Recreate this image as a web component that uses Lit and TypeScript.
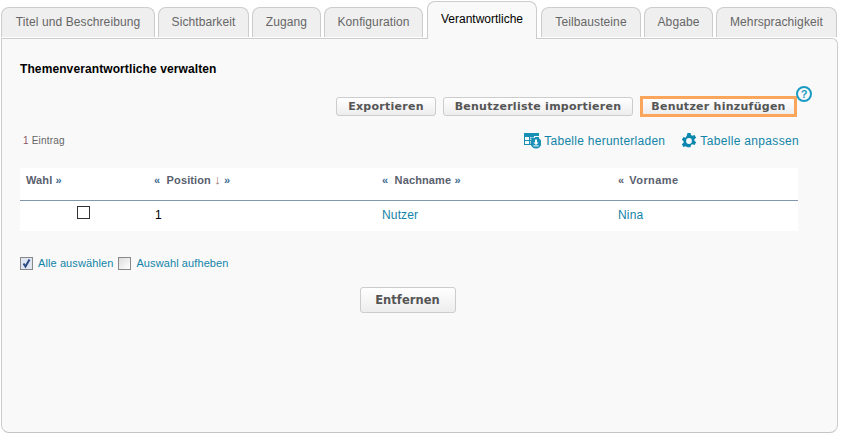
import { LitElement, html, css, svg } from "lit";
import { customElement } from "lit/decorators.js";

const TABS: [string, number, boolean][] = [
  ["Titel und Beschreibung", 154, false],
  ["Sichtbarkeit", 91, false],
  ["Zugang", 69, false],
  ["Konfiguration", 99, false],
  ["Verantwortliche", 110, true],
  ["Teilbausteine", 100, false],
  ["Abgabe", 69, false],
  ["Mehrsprachigkeit", 121, false],
];

const dlIcon = svg`<svg width="17" height="16" viewBox="0 0 17 16"><g fill="#1a8fb5"><rect x="0" y="0" width="15" height="3"/><path fill-rule="evenodd" d="M0 3h10v1H6v3h3v1H6v3h2v1H0zM1 4v3h4V4zM1 8v3h4V8z"/><rect x="6.500" y="4.500" width="3.500" height="2"/><rect x="11" y="4" width="4" height="2"/></g><circle cx="12" cy="10" r="5.500" fill="#1a8fb5"/><path d="M11 6.400h2v3h1.700l-2.700 2.600-2.700-2.600h1.700z" fill="#fff"/><rect x="9.300" y="12.400" width="5.400" height="1" fill="#fff"/></svg>`;

const gearIcon = svg`<svg width="16" height="16" viewBox="0 0 16 16"><path fill-rule="evenodd" fill="#0d86ad" d="M6.500 0h3l.5 2.200 1.400.8 2.200-.7 1.500 2.600-1.700 1.500v1.600l1.700 1.500-1.500 2.600-2.200-.7-1.400.8-.5 2.200h-3L6 14.200l-1.400-.8-2.200.7L.9 11.500l1.700-1.500V8.400L.9 6.900l1.500-2.600 2.200.7L6 2.200zM8 5.300a2.900 2.900 0 1 0 0 5.800 2.900 2.900 0 0 0 0-5.800z" transform="translate(0 -.2)"/></svg>`;

@customElement("app-root")
export class AppRoot extends LitElement {
  static styles = css`
    :host {
      display: block;
      width: 841px;
      height: 437px;
      background: #fff;
      font-family: "Liberation Sans", Arial, sans-serif;
      font-size: 12px;
      color: #000;
      overflow: hidden;
      box-sizing: border-box;
      padding: 1px 3px 0 1px;
    }
    .tabs {
      display: flex;
      height: 37px;
      align-items: flex-end;
      gap: 3px;
      position: relative;
      z-index: 1;
    }
    .tab {
      box-sizing: border-box;
      height: 30px;
      margin-bottom: 1px;
      border: 1px solid #ccc;
      border-bottom: none;
      border-radius: 8px 8px 0 0;
      background: #efefef;
      color: #666;
      display: flex;
      align-items: center;
      justify-content: center;
      padding-bottom: 2px;
      letter-spacing: 0.1px;
      flex: none;
    }
    .tab.active {
      height: 38px;
      margin: 0 1px -1px 1px;
      background: #f9f9f9;
      color: #000;
      padding-bottom: 4px;
      letter-spacing: 0;
    }
    .panel {
      box-sizing: border-box;
      width: 837px;
      height: 395px;
      border: 1px solid #ccc;
      border-bottom-color: #c4c4c4;
      border-radius: 0 6px 8px 8px;
      background: #f9f9f9;
      padding: 23px 40px 0 18px;
      display: flex;
      flex-direction: column;
    }
    h2 {
      margin: 0;
      font-size: 12px;
      line-height: 14px;
      font-weight: bold;
      color: #000;
      letter-spacing: 0.1px;
    }
    .actions {
      display: flex;
      justify-content: flex-end;
      align-items: center;
      gap: 7px;
      margin-top: 21px;
      height: 19px;
      position: relative;
    }
    button {
      font-family: "DejaVu Sans", Verdana, sans-serif;
      font-weight: bold;
      color: #555;
      border: 1px solid #ccc;
      border-radius: 3px;
      background: linear-gradient(#fff, #ededed);
      font-size: 11px;
      padding: 0;
      box-sizing: border-box;
      letter-spacing: 0.27px;
    }
    .actions button { height: 19px; }
    .b1 { width: 100px; }
    .b2 { width: 190px; }
    .actions .b3 {
      width: 157px;
      height: 21px;
      border: 3px solid #fba65a;
      border-radius: 0;
    }
    .help {
      position: absolute;
      right: -15px;
      top: -11px;
      width: 16px;
      height: 16px;
      border: 2px solid #1a9bc4;
      box-sizing: border-box;
      border-radius: 50%;
      color: #1a9bc4;
      font-size: 11px;
      font-weight: bold;
      line-height: 12px;
      text-align: center;
    }
    .meta {
      display: flex;
      justify-content: space-between;
      align-items: center;
      margin-top: 14px;
      height: 22px;
    }
    .count { font-size: 10px; color: #666; padding: 0 0 2px 3px; letter-spacing: 0.2px; }
    .count b { font-weight: normal; color: #8a5a6a; }
    .tools { display: flex; gap: 16px; margin-right: -2px; }
    .tool {
      display: flex;
      align-items: center;
      gap: 3px;
      color: #1284a8;
      font-size: 12px;
      letter-spacing: 0.27px;
    }
    .tool + .tool { letter-spacing: 0.33px; }
    .tool svg { display: block; }
    .table {
      margin-top: 16px;
      width: 778px;
      background: #fff;
    }
    .row {
      display: grid;
      grid-template-columns: 134px 228px 236px 1fr;
      align-items: center;
    }
    .row.head {
      height: 24px;
      border-bottom: 1px solid #8496ab;
      font-size: 11px;
      font-weight: bold;
      color: #59606e;
      padding-bottom: 8px;
      box-sizing: content-box;
    }
    .row.body { height: 28px; padding-bottom: 2px; }
    .cell { padding-left: 6px; white-space: pre; }
    .head .cell:not(:first-child) { padding-left: 0; }
    .head .cell { letter-spacing: 0.12px; }
    .head .arr { color: #3a6a92; }
    .head .red { color: #a0706a; font-weight: normal; font-size: 13px; line-height: 11px; }
    .head .vor { margin-left: 5px; letter-spacing: 0.45px; }
    .body .cell { padding-left: 0; font-size: 12px; }
    .body .pos { padding-left: 1px; }
    .body a { color: #1284a8; letter-spacing: 0.15px; }
    .chk {
      width: 13px;
      height: 13px;
      box-sizing: border-box;
      border: 1px solid #333;
      background: #fff;
      margin: -5px 0 0 57px;
    }
    .select {
      display: flex;
      align-items: center;
      margin-top: 23px;
      height: 18px;
      font-size: 11px;
      letter-spacing: 0.1px;
      color: #1284a8;
    }
    .sq {
      width: 13px;
      height: 13px;
      box-sizing: border-box;
      border: 1px solid #888;
      background: linear-gradient(135deg, #ddd, #fff);
      margin-right: 5px;
      display: flex;
    }
    .sq.c { background: #dfe6f2; }
    .select span { margin-right: 5px; }
    .actions-bottom { display: flex; justify-content: center; margin: 15px 2px 0 0; }
    .remove {
      width: 96px;
      height: 26px;
      font-size: 11.500px;
      letter-spacing: 0.05px;
    }
  `;

  render() {
    return html`
      <div class="tabs">
        ${TABS.map(
          ([t, w, a]) =>
            html`<div class="tab ${a ? "active" : ""}" style="width:${w}px">${t}</div>`
        )}
      </div>
      <div class="panel">
        <h2>Themenverantwortliche verwalten</h2>
        <div class="actions">
          <button class="b1">Exportieren</button>
          <button class="b2">Benutzerliste importieren</button>
          <button class="b3">Benutzer hinzufügen</button>
          <div class="help">?</div>
        </div>
        <div class="meta">
          <div class="count"><b>1</b> Eintrag</div>
          <div class="tools">
            <div class="tool">${dlIcon}<span>Tabelle herunterladen</span></div>
            <div class="tool">${gearIcon}<span>Tabelle anpassen</span></div>
          </div>
        </div>
        <div class="table">
          <div class="row head">
            <div class="cell">Wahl <span class="arr">»</span></div>
            <div class="cell"><span class="arr">«</span>  Position <span class="red">↓</span> <span class="arr">»</span></div>
            <div class="cell"><span class="arr">«</span>  Nachname <span class="arr">»</span></div>
            <div class="cell">«<span class="vor">Vorname</span></div>
          </div>
          <div class="row body">
            <div class="cell"><div class="chk"></div></div>
            <div class="cell pos">1</div>
            <div class="cell"><a>Nutzer</a></div>
            <div class="cell"><a>Nina</a></div>
          </div>
        </div>
        <div class="select">
          <div class="sq c">
            <svg width="11" height="11" viewBox="0 0 11 11"><path d="M2.500 5.500l2 3 4-7" fill="none" stroke="#2d4a86" stroke-width="2"/></svg>
          </div>
          <span>Alle auswählen</span>
          <div class="sq"></div>
          <span>Auswahl aufheben</span>
        </div>
        <div class="actions-bottom"><button class="remove">Entfernen</button></div>
      </div>
    `;
  }
}
